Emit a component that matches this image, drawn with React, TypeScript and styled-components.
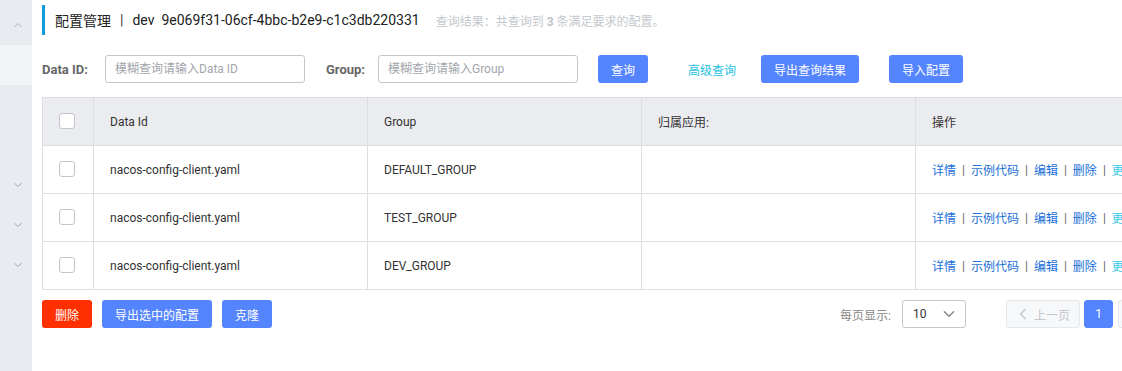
import React from "react";
import styled, { createGlobalStyle } from "styled-components";

const Global = createGlobalStyle`
  html, body { margin: 0; padding: 0; background: #fff; }
  body {
    font-family: Roboto, "Noto Sans CJK SC", "Noto Sans", sans-serif;
    font-size: 12px;
    color: #333;
    overflow: hidden;
  }
  * { box-sizing: border-box; }
`;

const Page = styled.div`
  display: flex;
  width: 1122px;
  height: 371px;
  overflow: hidden;
`;

const Sidebar = styled.nav`
  width: 32px;
  flex: none;
  background: #e9ebf0;
  display: flex;
  flex-direction: column;
`;

const SideItem = styled.div<{ $h: number; $light?: boolean; $pt?: number }>`
  height: ${(p) => p.$h}px;
  background: ${(p) => (p.$light ? "#f2f3f6" : "transparent")};
  display: flex;
  align-items: center;
  justify-content: center;
  padding-left: 4px;
  padding-top: ${(p) => p.$pt ?? 0}px;
`;

const Main = styled.main`
  flex: none;
  width: 1200px;
  padding: 5px 0 0 10px;
  display: flex;
  flex-direction: column;
`;

const TitleRow = styled.div`
  height: 30px;
  display: flex;
  align-items: center;
  border-left: 3px solid #0e9bd8;
  padding-left: 10px;
  white-space: nowrap;
`;

const TitleText = styled.span`
  font-size: 14px;
  color: #222;
`;

const TitleSep = styled.span`
  margin: 0 9px;
  font-size: 14px;
`;

const TitleId = styled.span`
  margin-left: 7px;
  font-size: 14px;
  color: #222;
`;

const ResultText = styled.span`
  margin-left: 16px;
  font-size: 12px;
  color: #c5c8ce;
`;

const Strong = styled.b`
  font-weight: 700;
  color: #bfc2c8;
`;

const SearchRow = styled.div`
  margin-top: 20px;
  height: 28px;
  display: flex;
  align-items: center;
`;

const Label = styled.label<{ $ml?: number; $w: number }>`
  font-weight: 700;
  color: #666;
  font-size: 13px;
  width: ${(p) => p.$w}px;
  flex: none;
  margin-left: ${(p) => p.$ml ?? 0}px;
  white-space: nowrap;
`;

const Input = styled.input`
  width: 200px;
  height: 28px;
  flex: none;
  border: 1px solid #c4c6cf;
  border-radius: 3px;
  padding: 0 9px;
  font-family: inherit;
  font-size: 12px;
  color: #333;
  outline: none;
  &::placeholder { color: #a3a6ad; }
`;

const Button = styled.button<{ $ml?: number; $w?: number; $danger?: boolean }>`
  height: 28px;
  width: ${(p) => (p.$w ? `${p.$w}px` : "auto")};
  margin-left: ${(p) => p.$ml ?? 0}px;
  padding: 0;
  border: none;
  border-radius: 3px;
  background: ${(p) => (p.$danger ? "#ff3000" : "#5584ff")};
  color: #fff;
  font-family: inherit;
  font-size: 12px;
  white-space: nowrap;
  flex: none;
`;

const LinkText = styled.span<{ $ml?: number }>`
  margin-left: ${(p) => p.$ml ?? 0}px;
  color: #27bfe0;
  font-size: 12px;
  white-space: nowrap;
`;

const TableWrap = styled.div`
  margin-top: 14px;
  width: 1147px;
  border-top: 1px solid #dcdee3;
  border-left: 1px solid #dcdee3;
`;

const Grid = styled.div<{ $head?: boolean }>`
  display: grid;
  grid-template-columns: 51px 274px 274px 274px 274px;
  height: 48px;
  background: ${(p) => (p.$head ? "#ebecf0" : "#fff")};
`;

const Cell = styled.div<{ $center?: boolean }>`
  border-right: 1px solid #dcdee3;
  border-bottom: 1px solid #dcdee3;
  display: flex;
  align-items: center;
  justify-content: ${(p) => (p.$center ? "center" : "flex-start")};
  padding: ${(p) => (p.$center ? "0 2px 0 0" : "0 16px")};
  white-space: nowrap;
  overflow: hidden;
  color: #333;
  font-size: 12px;
`;

const Check = styled.span`
  width: 16px;
  height: 16px;
  border: 1px solid #c4c6cf;
  border-radius: 3px;
  background: #fff;
  margin-top: -2px;
`;

const Action = styled.span<{ $more?: boolean }>`
  color: ${(p) => (p.$more ? "#36c8e6" : "#1a6fd8")};
`;

const ActSep = styled.span`
  color: #666;
  margin: 0 6px;
`;

const Footer = styled.div`
  margin-top: 10px;
  width: 1147px;
  height: 28px;
  display: flex;
  align-items: center;
`;

const Spacer = styled.div`
  flex: 1;
`;

const PageLabel = styled.span`
  color: #888;
  font-size: 12px;
  margin-right: 11px;
`;

const Select = styled.div`
  width: 64px;
  height: 28px;
  border: 1px solid #c4c6cf;
  border-radius: 3px;
  display: flex;
  align-items: center;
  justify-content: space-between;
  padding: 0 9px 0 10px;
  color: #333;
  font-size: 12px;
`;

const PageBtn = styled.div<{ $active?: boolean; $w: number; $ml: number }>`
  width: ${(p) => p.$w}px;
  margin-left: ${(p) => p.$ml}px;
  flex: none;
  height: 28px;
  border-radius: 3px;
  border: 1px solid ${(p) => (p.$active ? "#5584ff" : "#e6e7eb")};
  background: ${(p) => (p.$active ? "#5584ff" : "#f7f8fa")};
  color: ${(p) => (p.$active ? "#fff" : "#c4c6cf")};
  display: flex;
  align-items: center;
  justify-content: center;
  gap: 4px;
  font-size: 12px;
`;

const Chevron = ({ dir, size = 10, color = "#a0a8b8" }: { dir: "up" | "down" | "left" | "right"; size?: number; color?: string }) => {
  const d =
    dir === "up"
      ? "M2 7 L6 3 L10 7"
      : dir === "down"
      ? "M2 4 L6 8 L10 4"
      : dir === "left"
      ? "M8 2 L4 6 L8 10"
      : "M4 2 L8 6 L4 10";
  return (
    <svg width={size} height={size} viewBox="0 0 12 12" fill="none">
      <path d={d} stroke={color} strokeWidth="1.2" strokeLinecap="round" strokeLinejoin="round" />
    </svg>
  );
};

const rows = [
  { id: "nacos-config-client.yaml", group: "DEFAULT_GROUP" },
  { id: "nacos-config-client.yaml", group: "TEST_GROUP" },
  { id: "nacos-config-client.yaml", group: "DEV_GROUP" },
];

const Actions = () => (
  <>
    <Action>详情</Action>
    <ActSep>|</ActSep>
    <Action>示例代码</Action>
    <ActSep>|</ActSep>
    <Action>编辑</Action>
    <ActSep>|</ActSep>
    <Action>删除</Action>
    <ActSep>|</ActSep>
    <Action $more>更多</Action>
  </>
);

export default function App() {
  return (
    <Page>
      <Global />
      <Sidebar>
        <SideItem $h={45} $pt={6}>
          <Chevron dir="up" color="#aab1c0" />
        </SideItem>
        <SideItem $h={40} $light />
        <SideItem $h={40} />
        <SideItem $h={40} />
        <SideItem $h={40}>
          <Chevron dir="down" />
        </SideItem>
        <SideItem $h={40}>
          <Chevron dir="down" />
        </SideItem>
        <SideItem $h={40}>
          <Chevron dir="down" />
        </SideItem>
      </Sidebar>
      <Main>
        <TitleRow>
          <TitleText>配置管理</TitleText>
          <TitleSep>|</TitleSep>
          <TitleText>dev</TitleText>
          <TitleId>9e069f31-06cf-4bbc-b2e9-c1c3db220331</TitleId>
          <ResultText>
            查询结果：共查询到 <Strong>3</Strong> 条满足要求的配置。
          </ResultText>
        </TitleRow>
        <SearchRow>
          <Label $w={63}>Data ID:</Label>
          <Input placeholder="模糊查询请输入Data ID" />
          <Label $ml={21} $w={52}>Group:</Label>
          <Input placeholder="模糊查询请输入Group" />
          <Button $ml={20} $w={50}>查询</Button>
          <LinkText $ml={40}>高级查询</LinkText>
          <Button $ml={25} $w={98}>导出查询结果</Button>
          <Button $ml={30} $w={74}>导入配置</Button>
        </SearchRow>
        <TableWrap>
          <Grid $head>
            <Cell $center>
              <Check />
            </Cell>
            <Cell>Data Id</Cell>
            <Cell>Group</Cell>
            <Cell>归属应用:</Cell>
            <Cell>操作</Cell>
          </Grid>
          {rows.map((r, i) => (
            <Grid key={i}>
              <Cell $center>
                <Check />
              </Cell>
              <Cell>{r.id}</Cell>
              <Cell>{r.group}</Cell>
              <Cell />
              <Cell>
                <Actions />
              </Cell>
            </Grid>
          ))}
        </TableWrap>
        <Footer>
          <Button $danger $w={50}>删除</Button>
          <Button $ml={10} $w={110}>导出选中的配置</Button>
          <Button $ml={10} $w={50}>克隆</Button>
          <Spacer />
          <PageLabel>每页显示:</PageLabel>
          <Select>
            <span>10</span>
            <Chevron dir="down" size={14} color="#888" />
          </Select>
          <PageBtn $w={74} $ml={40}>
            <Chevron dir="left" size={14} color="#c4c6cf" />
            上一页
          </PageBtn>
          <PageBtn $w={29} $ml={4} $active>
            1
          </PageBtn>
          <PageBtn $w={71} $ml={5}>
            下一页
            <Chevron dir="right" size={14} color="#c4c6cf" />
          </PageBtn>
        </Footer>
      </Main>
    </Page>
  );
}
